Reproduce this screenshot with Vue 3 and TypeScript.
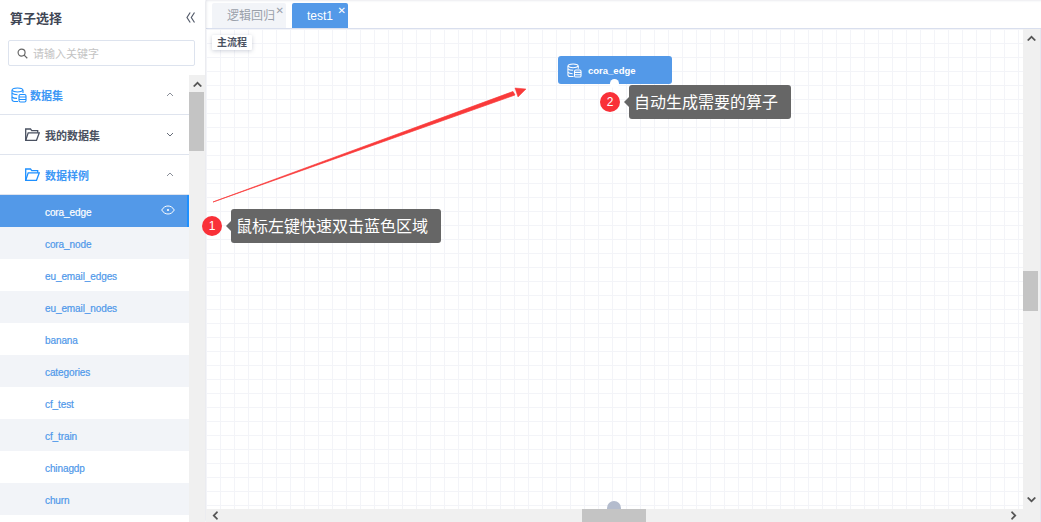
<script setup lang="ts">
const rows: string[] = ['cora_node', 'eu_email_edges', 'eu_email_nodes', 'banana', 'categories', 'cf_test', 'cf_train', 'chinagdp', 'churn']
</script>

<template>
  <div class="app">
    <aside class="side">
      <header class="side-head">
        <span class="side-title">算子选择</span>
        <svg class="collapse" width="9" height="11" viewBox="0 0 9 11" fill="none" stroke="#555c6b" stroke-width="1.200"><path d="M4.200 .5 1 5.500l3.200 5M8.500 .5 5.300 5.500l3.200 5" /></svg>
      </header>
      <div class="search">
        <svg width="11" height="11" viewBox="0 0 12 12" fill="none" stroke="#666" stroke-width="1.300"><circle cx="5" cy="5" r="3.800" /><path d="m7.800 7.800 3.400 3.400" /></svg>
        <span>请输入关键字</span>
      </div>
      <div class="list-wrap">
        <div class="list">
          <div class="group top">
            <svg class="db" width="16" height="16" viewBox="0 0 16 16" fill="none" stroke="#1e90ff" stroke-width="1.100"><path d="M7 14.500H3.500C2 14.500 1 13.600 1 12.600V3.400C1 2 3.200 1 6.500 1s5.500 1 5.500 2.400V6" /><path d="M1 6.200c1 1 3 1.500 5.500 1.500M1 10c1 1 2.500 1.400 5 1.400" /><path d="M1 3.400c1 1.100 3 1.600 5.500 1.600s4.500-.5 5.500-1.600" /><rect x="8" y="7.500" width="7" height="7.500" rx="1.500" /><path d="M8 10h7M8 12.500h7" /></svg>
            <span class="blue">数据集</span>
            <svg class="chev" width="8" height="5" viewBox="0 0 8 5" fill="none" stroke="#8a8f99"><path d="m1 4 3-3 3 3" /></svg>
          </div>
          <div class="group sub">
            <svg class="folder" width="15" height="13" viewBox="0 0 15 13" fill="none" stroke="#4a5161" stroke-width="1.300"><path d="M.7 12.300V1h4.800l1.200 1.700h6v2" /><path d="M.7 12.300h10.800l2.800-7.500H3.200L.7 12.300Z" /></svg>
            <span class="dark">我的数据集</span>
            <svg class="chev" width="8" height="5" viewBox="0 0 8 5" fill="none" stroke="#666c78"><path d="m1 1 3 3 3-3" /></svg>
          </div>
          <div class="group sub">
            <svg class="folder" width="15" height="13" viewBox="0 0 15 13" fill="none" stroke="#1e90ff" stroke-width="1.300"><path d="M.7 12.300V1h4.800l1.200 1.700h6v2" /><path d="M.7 12.300h10.800l2.800-7.500H3.200L.7 12.300Z" /></svg>
            <span class="blue">数据样例</span>
            <svg class="chev" width="8" height="5" viewBox="0 0 8 5" fill="none" stroke="#8a8f99"><path d="m1 4 3-3 3 3" /></svg>
          </div>
          <div class="row active">
            <span>cora_edge</span>
            <svg class="eye" width="14" height="10" viewBox="0 0 14 10" fill="none" stroke="#fff"><path d="M.7 5C2.500 2.200 4.500 1 7 1s4.500 1.200 6.300 4C11.500 7.800 9.500 9 7 9S2.500 7.800.7 5Z" /><circle cx="7" cy="5" r="1.100" fill="#fff" stroke="none" /></svg>
          </div>
          <div v-for="(r, i) in rows" :key="r" class="row" :class="{ alt: i % 2 === 0 }">{{ r }}</div>
        </div>
        <div class="vbar side-bar">
          <svg class="arrow" width="9" height="6" viewBox="0 0 9 6"><path d="M0 5 4.500 .5 9 5 7.500 6 4.500 3 1.500 6Z" fill="#555" /></svg>
          <div class="side-thumb"></div>
        </div>
      </div>
    </aside>

    <main class="main">
      <nav class="tabs">
        <div class="tab">逻辑回归<span class="x">✕</span></div>
        <div class="tab on">test1<span class="x">✕</span></div>
      </nav>
      <div class="stage">
        <div class="canvas">
          <div class="flow-label">主流程</div>

          <div class="node">
            <svg width="15" height="15" viewBox="0 0 16 16" fill="none" stroke="#fff" stroke-width="1.100"><path d="M7 14.500H3.500C2 14.500 1 13.600 1 12.600V3.400C1 2 3.200 1 6.500 1s5.500 1 5.500 2.400V6" /><path d="M1 6.200c1 1 3 1.500 5.500 1.500M1 10c1 1 2.500 1.400 5 1.400" /><path d="M1 3.400c1 1.100 3 1.600 5.500 1.600s4.500-.5 5.500-1.600" /><rect x="8" y="7.500" width="7" height="7.500" rx="1.500" /><path d="M8 10h7M8 12.500h7" /></svg>
            <span>cora_edge</span>
            <i class="port"></i>
          </div>
          <i class="stray-port"></i>

          <svg class="arrow-line" width="330" height="130" viewBox="0 0 330 130">
            <path d="M7 117 307 6.500 309 10Z" fill="#f93a3a" stroke="#f93a3a" stroke-width=".7" stroke-linejoin="round" />
            <path d="M320 4 309 3 312 12Z" fill="#f93a3a" stroke="#f93a3a" stroke-width=".5" />
          </svg>

          <div class="tip tip-a">
            <b class="num">1</b>
            <div class="bubble">鼠标左键快速双击蓝色区域</div>
          </div>
          <div class="tip tip-b">
            <b class="num">2</b>
            <div class="bubble">自动生成需要的算子</div>
          </div>
        </div>
        <div class="vbar main-v">
          <svg class="arrow" width="9" height="6" viewBox="0 0 9 6"><path d="M0 5 4.500 .5 9 5 7.500 6 4.500 3 1.500 6Z" fill="#555" /></svg>
          <div class="main-v-thumb"></div>
          <svg class="arrow down" width="9" height="6" viewBox="0 0 9 6"><path d="M0 1 4.500 5.500 9 1 7.500 0 4.500 3 1.500 0Z" fill="#555" /></svg>
        </div>
        <div class="hbar">
          <svg width="6" height="9" viewBox="0 0 6 9"><path d="M5 0 .5 4.500 5 9 6 7.500 3 4.500 6 1.500Z" fill="#555" /></svg>
          <div class="h-thumb"></div>
          <svg width="6" height="9" viewBox="0 0 6 9"><path d="M1 0 5.500 4.500 1 9 0 7.500 3 4.500 0 1.500Z" fill="#555" /></svg>
        </div>
      </div>
    </main>
  </div>
</template>

<style>
html, body { margin: 0; overflow: hidden; background: #fff; }
</style>

<style scoped>
.app {
  width: 1041px;
  height: 522px;
  display: flex;
  overflow: hidden;
  font-family: "Liberation Sans", "Noto Sans CJK SC", sans-serif;
}
.side {
  width: 205px;
  flex: none;
  display: flex;
  flex-direction: column;
  box-shadow: 1px 0 3px rgba(90, 100, 130, .2);
  z-index: 2;
  background: #fff;
}
.side-head {
  height: 35px;
  padding: 0 10px;
  display: flex;
  align-items: center;
  justify-content: space-between;
  flex: none;
}
.side-title { font-size: 13px; font-weight: 700; color: #3f4654; }
.search {
  margin: 5px 10px 0 8px;
  height: 24px;
  border: 1px solid #dde3ee;
  border-radius: 2px;
  display: flex;
  align-items: center;
  gap: 5px;
  padding-left: 8px;
  font-size: 11px;
  color: #c3c3c3;
  flex: none;
}
.list-wrap {
  margin-top: 9px;
  flex: 1;
  min-height: 0;
  display: flex;
}
.list { width: 189px; flex: none; overflow: hidden; }
.group {
  display: flex;
  align-items: center;
  font-size: 11px;
  font-weight: 700;
  border-bottom: 1px solid #dfe4ee;
  box-sizing: border-box;
  height: 40px;
}
.group.top { padding-left: 11px; }
.group.top .db { margin-right: 3px; }
.group.sub { padding-left: 25px; }
.folder { margin-right: 5px; }
.chev { margin-left: auto; margin-right: 15px; }
.blue { color: #3d97f5; }
.dark { color: #4a5161; }
.row {
  height: 32px;
  box-sizing: border-box;
  padding: 2px 0 0 45px;
  display: flex;
  align-items: center;
  font-size: 10px;
  letter-spacing: -.1px;
  -webkit-text-stroke: .2px currentColor;
  color: #4f98ea;
}
.row.alt { background: #f2f4f8; }
.row.active {
  background: #5399e8;
  color: #fff;
  border-right: 2px solid #1e90ff;
  justify-content: space-between;
  padding-right: 12px;
}
.eye { margin-top: -4px; }
.vbar { background: #f0f0f0; display: flex; flex-direction: column; align-items: center; flex: none; }
.side-bar { width: 16px; }
.arrow { margin-top: 6px; flex: none; }
.side-thumb { width: 15px; height: 59px; background: #c4c4c4; margin-top: 5px; align-self: flex-start; }

.main { flex: 1; min-width: 0; display: flex; flex-direction: column; margin-left: 1px; }
.tabs {
  height: 29px;
  flex: none;
  box-sizing: border-box;
  border-bottom: 1px solid #d9dfee;
  display: flex;
  align-items: flex-end;
  padding-left: 6px;
  gap: 6px;
  box-shadow: inset 0 2px 2px -1px rgba(90, 100, 130, .12);
}
.tab {
  height: 25px;
  width: 74px;
  box-sizing: border-box;
  background: #f2f4f8;
  color: #9aa0aa;
  font-size: 12px;
  border-radius: 2px 2px 0 0;
  padding-left: 15px;
  line-height: 26px;
  position: relative;
}
.tab.on { width: 56px; background: #5399e8; color: #fff; }
.x {
  position: absolute;
  right: 2px;
  top: 1px;
  font-size: 10px;
  line-height: 14px;
  font-weight: 700;
  color: #9aa0aa;
  font-family: "DejaVu Sans", sans-serif;
}
.tab.on .x { color: #fff; }
.stage {
  flex: 1;
  min-height: 0;
  display: grid;
  grid-template-columns: 817px 18px;
  grid-template-rows: 480px 13px;
  position: relative;
  z-index: 3;
}
.canvas {
  position: relative;
  background-color: #fff;
  background-image:
    linear-gradient(#f3f4f8 1px, transparent 1px),
    linear-gradient(90deg, #f3f4f8 1px, transparent 1px);
  background-size: 14px 14px;
}
.flow-label {
  position: absolute;
  left: 6px;
  top: 6px;
  height: 15px;
  padding: 0 5px;
  font-size: 10px;
  font-weight: 700;
  line-height: 16px;
  color: #4a5161;
  background: #fff;
  box-shadow: 0 1px 4px rgba(90, 100, 130, .3);
  border-radius: 1px;
}
.node {
  position: absolute;
  left: 352px;
  top: 27px;
  width: 114px;
  height: 28px;
  box-sizing: border-box;
  background: #5399e8;
  border-radius: 3px;
  display: flex;
  align-items: center;
  color: #fff;
  font-size: 9.500px;
  font-weight: 700;
  padding-left: 9px;
  gap: 6px;
}
.port {
  position: absolute;
  left: 53px;
  top: 24px;
  width: 7px;
  height: 7px;
  border-radius: 50%;
  background: #fff;
  box-shadow: 0 0 0 1px #fff;
}
.stray-port {
  position: absolute;
  left: 401px;
  top: 472px;
  width: 14px;
  height: 14px;
  border-radius: 50%;
  background: #b4bccd;
}
.arrow-line { position: absolute; left: 0; top: 56px; }
.tip { position: absolute; display: flex; align-items: center; }
.tip-a { left: -4px; top: 180px; }
.tip-b { left: 394px; top: 56px; }
.num {
  width: 20px;
  height: 20px;
  border-radius: 50%;
  background: #f93038;
  color: #fff;
  font-size: 12px;
  font-weight: 400;
  line-height: 20px;
  text-align: center;
  margin-right: 9px;
}
.bubble {
  position: relative;
  height: 34px;
  line-height: 36px;
  padding: 0 13px 0 5px;
  background: #666;
  border-radius: 3px;
  color: #fff;
  font-size: 16px;
}
.bubble::before {
  content: "";
  position: absolute;
  left: -5px;
  top: 12px;
  border-style: solid;
  border-width: 5px 5px 5px 0;
  border-color: transparent #666 transparent transparent;
}
.main-v { width: 17px; border-right: 1px solid #e4e8f1; grid-column: 2; grid-row: 1 / 3; position: relative; }
.main-v-thumb { position: absolute; left: 0; top: 242px; width: 15px; height: 40px; background: #c4c4c4; }
.down { position: absolute; top: 468px; margin: 0; }
.hbar {
  grid-column: 1;
  grid-row: 2;
  background: #f0f0f0;
  position: relative;
  display: flex;
  align-items: center;
  justify-content: space-between;
  padding: 0 6px;
}
.h-thumb { position: absolute; left: 376px; top: 0; width: 64px; height: 13px; background: #c4c4c4; }
</style>
